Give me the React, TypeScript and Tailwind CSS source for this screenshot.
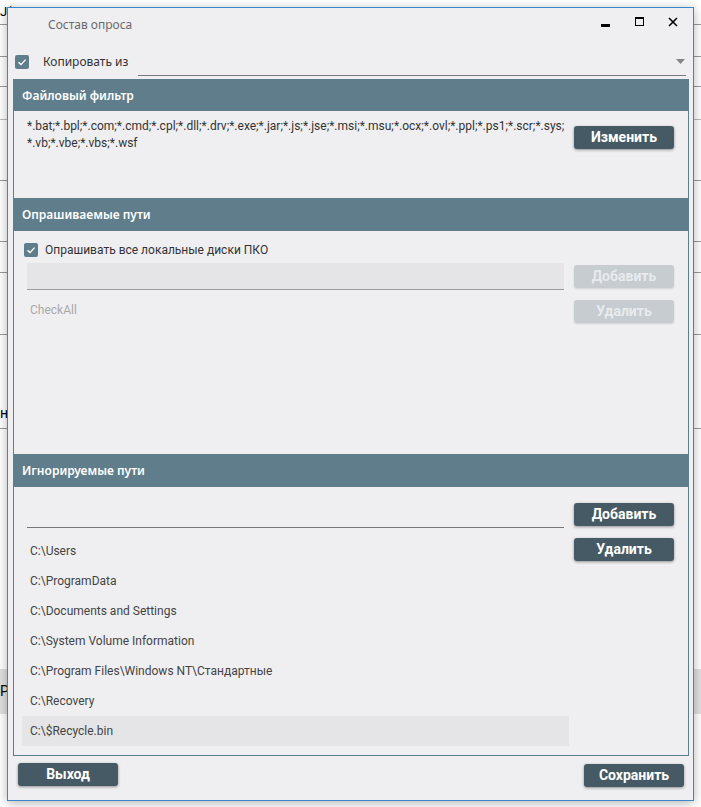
import React from 'react';

const IGNORED = [
    'C:\\Users',
    'C:\\ProgramData',
    'C:\\Documents and Settings',
    'C:\\System Volume Information',
    'C:\\Program Files\\Windows NT\\Стандартные',
    'C:\\Recovery',
    'C:\\$Recycle.bin',
];

const FILTER =
    '*.bat;*.bpl;*.com;*.cmd;*.cpl;*.dll;*.drv;*.exe;*.jar;*.js;*.jse;*.msi;*.msu;*.ocx;*.ovl;*.ppl;*.ps1;*.scr;*.sys; *.vb;*.vbe;*.vbs;*.wsf';

const Check: React.FC = () => (
    <span className="flex h-[14px] w-[14px] items-center justify-center rounded-[2px] bg-[#607d8b]">
        <svg width="10" height="10" viewBox="0 0 10 10" fill="none">
            <path d="M1.5 5.2 L4 7.6 L8.6 2.6" stroke="white" strokeWidth="1.4" />
        </svg>
    </span>
);

const Btn: React.FC<{ label: string; disabled?: boolean }> = ({ label, disabled }) => (
    <button
        className={
            disabled
                ? 'h-[23px] w-[100px] rounded-[3px] bg-[#c6ccd0] text-[14px] font-bold text-[#e8ebed] shadow-[0_1px_2px_rgba(0,0,0,0.12)]'
                : 'h-[23px] w-[100px] rounded-[3px] bg-[#455a64] text-[14px] font-bold text-white shadow-[0_1px_3px_rgba(0,0,0,0.4)]'
        }
    >
        {label}
    </button>
);

const Header: React.FC<{ title: string; h: string }> = ({ title, h }) => (
    <div className={`flex items-center bg-[#607d8b] pl-[8px] font-['Noto_Sans',sans-serif] text-[12px] font-semibold text-white ${h}`}>
        {title}
    </div>
);

const BgRows: React.FC = () => (
    <div className="flex flex-col">
        <div className="h-[25px] border-b border-[#9a9a9a]" />
        <div className="h-[32px] border-b border-[#9a9a9a]" />
        <div className="h-[30px] border-b border-[#9a9a9a]" />
        <div className="h-[33px] border-b border-[#bdbdbd]" />
        <div className="h-[61px] border-b border-[#9a9a9a]" />
        <div className="h-[61px] border-b border-[#9a9a9a]" />
        <div className="h-[31px] border-b border-[#9a9a9a]" />
        <div className="h-[62px] border-b border-[#9a9a9a]" />
        <div className="flex h-[94px] items-end border-b border-[#9a9a9a] pb-[4px] text-[14px] text-black">н</div>
        <div className="h-[240px]" />
        <div className="flex h-[45px] items-center bg-[#e1e1e1] text-[14px] text-black">P</div>
    </div>
);

export default function App() {
    return (
        <div className="relative h-[807px] w-[701px] overflow-hidden bg-white font-['Roboto',sans-serif]">
            <BgRows />
            <div className="absolute left-0 top-[2px] text-[13px] text-black">J(</div>

            <div className="absolute left-[7px] top-[7px] flex h-[794px] w-[687px] flex-col border border-[#3a86c8] bg-[#efeff2] shadow-[0_2px_10px_rgba(0,0,0,0.3)]">
                {/* title bar */}
                <div className="flex h-[40px] items-start">
                    <div className="flex h-[34px] items-center pl-[40px] font-['Noto_Sans',sans-serif] text-[12px] text-[#6a6a6a]">
                        Состав опроса
                    </div>
                    <div className="ml-auto flex pr-[3px] pt-[8px]">
                        <div className="flex h-[12px] w-[34px] items-end justify-center">
                            <div className="mb-[1px] h-[3px] w-[9px] bg-black" />
                        </div>
                        <div className="flex h-[12px] w-[34px] items-start justify-center">
                            <div className="mt-[1px] h-[9px] w-[9px] border border-t-[2px] border-black" />
                        </div>
                        <div className="flex h-[12px] w-[34px] items-center justify-center">
                            <svg width="10" height="10" viewBox="0 0 10 10">
                                <path d="M1 1 L9 9 M9 1 L1 9" stroke="black" strokeWidth="1.6" />
                            </svg>
                        </div>
                    </div>
                </div>

                {/* copy from */}
                <div className="flex h-[28px] items-center pl-[7px] pr-[7px]">
                    <Check />
                    <span className="ml-[14px] w-[95px] font-['Noto_Sans',sans-serif] text-[12px] text-[#333]">Копировать из</span>
                    <div className="flex h-[28px] flex-1 items-center justify-end border-b border-[#7a7a7a] pr-[1px]">
                        <svg width="9" height="5" viewBox="0 0 9 5">
                            <path d="M0 0 L9 0 L4.5 5 Z" fill="#858585" />
                        </svg>
                    </div>
                </div>

                {/* main panel */}
                <div className="ml-[5px] mr-[4px] mt-[3px] flex h-[677px] flex-col border border-[#607d8b]">
                    <Header title="Файловый фильтр" h="h-[31px]" />
                    <div className="flex h-[87px]">
                        <div className="ml-[13px] w-[537px] pt-[7px] text-[12px] leading-[17px] text-[#333]">{FILTER}</div>
                        <div className="ml-[10px] pt-[14px]">
                            <Btn label="Изменить" />
                        </div>
                    </div>

                    <Header title="Опрашиваемые пути" h="h-[33px]" />
                    <div className="flex h-[223px] flex-col">
                        <div className="ml-[10px] mt-[12px] flex h-[14px] items-center">
                            <Check />
                            <span className="ml-[7px] text-[12px] text-[#333]">Опрашивать все локальные диски ПКО</span>
                        </div>
                        <div className="mt-[6px] flex">
                            <div className="ml-[13px] flex w-[537px] flex-col">
                                <div className="h-[27px] border-b border-[#9c9c9c] bg-[#e5e5e8]" />
                                <div className="mt-[12px] pl-[3px] text-[12px] leading-[17px] text-[#a9a9a9]">CheckAll</div>
                            </div>
                            <div className="ml-[10px] flex flex-col gap-[12px] pt-[2px]">
                                <Btn label="Добавить" disabled />
                                <Btn label="Удалить" disabled />
                            </div>
                        </div>
                    </div>

                    <Header title="Игнорируемые пути" h="h-[33px]" />
                    <div className="flex flex-1">
                        <div className="ml-[8px] flex w-[547px] flex-col pt-[13px]">
                            <div className="ml-[5px] h-[28px] w-[537px] border-b border-[#777]" />
                            <div className="mt-[8px] flex flex-col">
                                {IGNORED.map((p, i) => (
                                    <div
                                        key={p}
                                        className={`flex h-[30px] items-center pl-[8px] text-[12px] text-[#444] ${i === IGNORED.length - 1 ? 'bg-[#e5e5e8]' : ''}`}
                                    >
                                        {p}
                                    </div>
                                ))}
                            </div>
                        </div>
                        <div className="ml-[5px] flex flex-col gap-[12px] pt-[16px]">
                            <Btn label="Добавить" />
                            <Btn label="Удалить" />
                        </div>
                    </div>
                </div>

                {/* footer */}
                <div className="mt-[7px] flex px-[9px] pl-[10px]">
                    <Btn label="Выход" />
                    <div className="ml-auto">
                        <Btn label="Сохранить" />
                    </div>
                </div>
            </div>
        </div>
    );
}
